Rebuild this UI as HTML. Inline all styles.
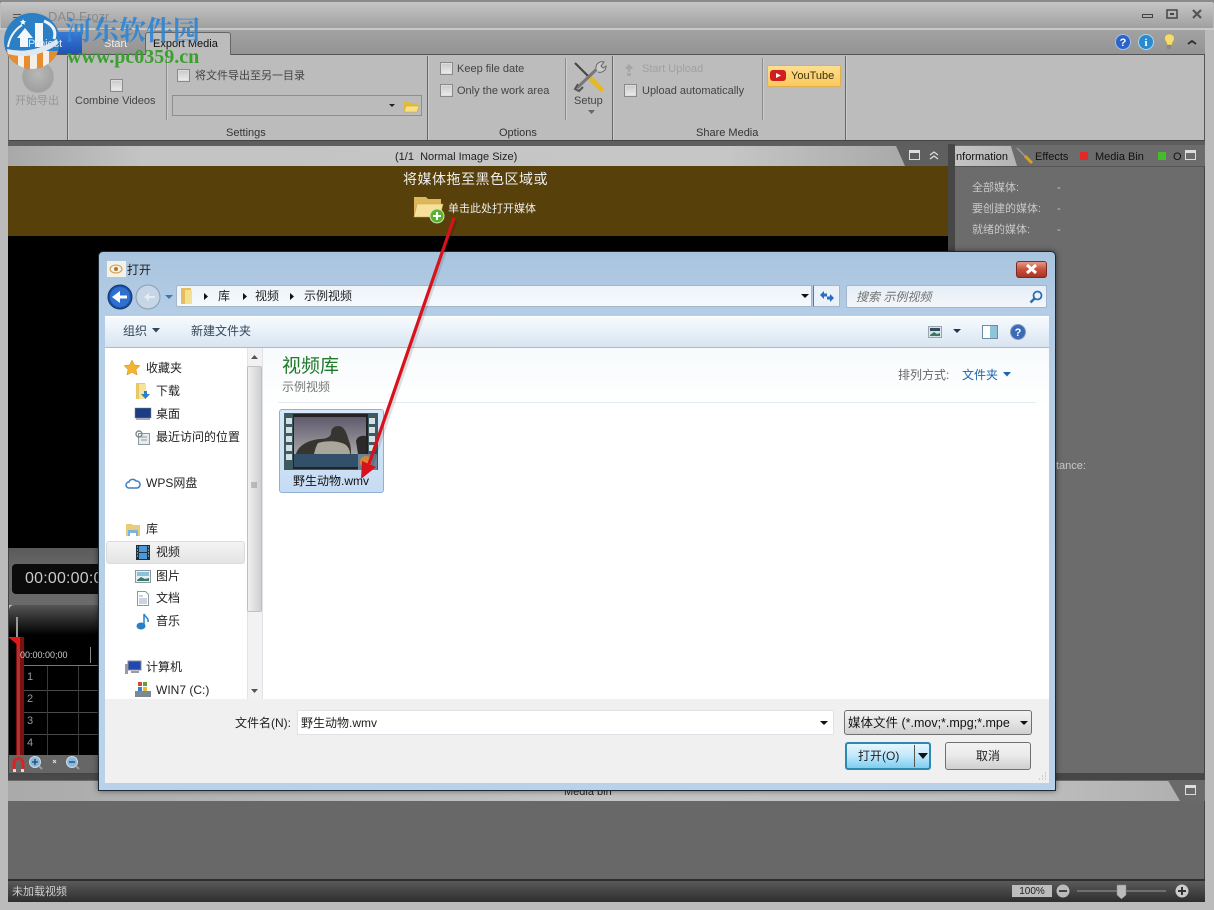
<!DOCTYPE html>
<html><head><meta charset="utf-8"><style>
*{box-sizing:border-box}
html,body{margin:0;padding:0}
body{width:1214px;height:910px;position:relative;overflow:hidden;background:#bbb;font-family:"Liberation Sans","Noto Sans CJK SC",sans-serif;font-size:11px;color:#333}
div{position:absolute}
.t{position:absolute;white-space:nowrap;line-height:14px}
.cb{position:absolute;width:13px;height:13px;border:1px solid #8a8a8a;background:linear-gradient(#c8c8c8,#eee);box-shadow:inset 0 0 0 1px #ddd}
.vs{position:absolute;width:1px;background:#8c8c8c;box-shadow:1px 0 #ccc}
.d{font-size:12px;color:#222}
svg{position:absolute;overflow:visible}
</style></head><body>

<!-- title bar -->
<div style="left:0;top:0;width:1214px;height:3px;background:#8a8a8a"></div>
<div style="left:1px;top:2px;width:1212px;height:26px;background:linear-gradient(#c6c6c6,#a0a0a0)"></div>
<div style="left:0;top:28px;width:1214px;height:2px;background:#c9c9c9"></div>
<div class="t" style="left:48px;top:10px;font-size:13px;color:#8a8a8a">DAD Frozr</div>
<div style="left:13px;top:14px;width:8px;height:1px;background:#555;box-shadow:0 3px #555"></div>
<svg style="left:1140px;top:8px" width="60" height="14"><rect x="2.500" y="6.500" width="10" height="3" fill="none" stroke="#444"/><rect x="27" y="2" width="10" height="8" fill="none" stroke="#444" stroke-width="1.500"/><rect x="30" y="5" width="4" height="2" fill="#444"/><path d="M53 2l8 8M61 2l-8 8" stroke="#555" stroke-width="2.200"/></svg>

<!-- tab bar -->
<div style="left:8px;top:30px;width:1197px;height:25px;background:linear-gradient(#a2a2a2,#949494);border-bottom:1px solid #555"></div>
<div style="left:8px;top:32px;width:74px;height:22px;background:linear-gradient(#3a78d8,#1e54b4)"></div>
<div class="t" style="left:104px;top:37px;color:#eee;font-size:11px">Start</div>
<div style="left:145px;top:32px;width:86px;height:24px;background:#bcbcbc;border:1px solid #666;border-bottom:0;border-radius:3px 3px 0 0"></div>
<div class="t" style="left:153px;top:37px;color:#111;font-size:11px">Export Media</div>
<svg style="left:1112px;top:30px" width="90" height="22">
<circle cx="11" cy="12" r="7.500" fill="#2f62c8" stroke="#9cc0ee"/><text x="11" y="16" font-size="11" font-weight="bold" fill="#fff" text-anchor="middle" font-family="Liberation Sans">?</text>
<circle cx="34" cy="12" r="7.500" fill="#2a8ad0" stroke="#a8d8f0"/><text x="34" y="16" font-size="11" font-weight="bold" fill="#fff" text-anchor="middle" font-family="Liberation Serif">i</text>
<path d="M57 4c4 0 6 3 5 6c-1 2-2 3-2 5h-5c0-2-1-3-2-5c-1-3 1-6 4-6z" fill="#f5dc70" stroke="#b09a40" stroke-width=".5"/><rect x="55" y="15" width="4" height="4" fill="#888"/>
<path d="M76 14l4-3 4 3" fill="none" stroke="#333" stroke-width="2"/></svg>

<!-- ribbon -->
<div style="left:8px;top:55px;width:1197px;height:86px;background:#bcbcbc;border-left:1px solid #777;border-right:1px solid #555;border-bottom:1px solid #444"></div>
<div class="vs" style="left:67px;top:56px;height:84px;background:#666"></div>
<div class="vs" style="left:166px;top:56px;height:64px"></div>
<div class="vs" style="left:427px;top:56px;height:84px;background:#666"></div>
<div class="vs" style="left:565px;top:58px;height:62px"></div>
<div class="vs" style="left:612px;top:56px;height:84px;background:#666"></div>
<div class="vs" style="left:762px;top:58px;height:62px"></div>
<div class="vs" style="left:845px;top:56px;height:84px;background:#666"></div>
<div style="left:22px;top:61px;width:32px;height:32px;border-radius:50%;background:radial-gradient(circle at 50% 40%,#b8b8b8,#979797);border:1px solid #aaa"></div>
<div class="t" style="left:15px;top:94px;color:#969696">开始导出</div>
<div class="cb" style="left:110px;top:79px"></div>
<div class="t" style="left:75px;top:94px;color:#444">Combine Videos</div>
<div class="cb" style="left:177px;top:69px"></div>
<div class="t" style="left:195px;top:69px;color:#444">将文件导出至另一目录</div>
<div style="left:172px;top:95px;width:250px;height:21px;border:1px solid #8e8e8e;background:#bbb"></div>
<svg style="left:386px;top:98px" width="34" height="16"><path d="M3 6h6l-3 3z" fill="#222"/><path d="M18 4h5l1 1h7v9H18z" fill="#e5b93e"/><path d="M18 14l2-6h13l-2 6z" fill="#f8e080" stroke="#c9a030" stroke-width=".5"/></svg>
<div class="t" style="left:226px;top:126px;color:#333">Settings</div>
<div class="cb" style="left:440px;top:62px"></div>
<div class="t" style="left:457px;top:62px;color:#444">Keep file date</div>
<div class="cb" style="left:440px;top:84px"></div>
<div class="t" style="left:457px;top:84px;color:#444">Only the work area</div>
<div class="t" style="left:499px;top:126px;color:#333">Options</div>
<svg style="left:572px;top:60px" width="34" height="34"><path d="M3 3l27 27" stroke="#444" stroke-width="2"/><path d="M18 18l11 11" stroke="#e8b820" stroke-width="5" stroke-linecap="round"/><path d="M29 5L5 28" stroke="#777" stroke-width="3"/><path d="M6 24l-3 5 4 2 4-4" fill="none" stroke="#555" stroke-width="2"/><path d="M24 8a6 6 0 0 1 8-6l-3 4 2 2 3-2a6 6 0 0 1-8 6" fill="#ccc" stroke="#666"/></svg>
<div class="t" style="left:574px;top:94px;color:#444">Setup</div>
<svg style="left:588px;top:110px" width="8" height="5"><path d="M0 0h7l-3.500 4z" fill="#666"/></svg>
<svg style="left:623px;top:63px" width="12" height="15"><path d="M6 1l4 4-3 2v2H5V7L2 5z" fill="#a6a6a6"/><rect x="4" y="10" width="4" height="3" fill="#a6a6a6"/></svg>
<div class="t" style="left:642px;top:62px;color:#a0a0a0">Start Upload</div>
<div class="cb" style="left:624px;top:84px"></div>
<div class="t" style="left:642px;top:84px;color:#444">Upload automatically</div>
<div style="left:767px;top:65px;width:74px;height:22px;background:linear-gradient(#fddf90,#fbc95c);border:1px solid #e0b050;border-radius:2px"></div>
<svg style="left:770px;top:70px" width="16" height="12"><rect width="16" height="11" rx="3" fill="#cf1f1f"/><path d="M6 3l5 2.500-5 2.500z" fill="#fff"/></svg>
<div class="t" style="left:791px;top:69px;color:#3c3010">YouTube</div>
<div class="t" style="left:696px;top:126px;color:#333">Share Media</div>

<!-- middle strip -->
<div style="left:8px;top:141px;width:1197px;height:5px;background:#5e5e5e"></div>
<div style="left:8px;top:145px;width:940px;height:21px;background:#5f5f5f"></div>
<div style="left:8px;top:146px;width:897px;height:20px;background:linear-gradient(90deg,#a8a8a8,#c4c4c4 15%,#c6c6c6 80%,#a9a9a9);clip-path:polygon(0 0,99% 0,100% 100%,0 100%)"></div>
<div class="t" style="left:395px;top:150px;color:#222">(1/1&nbsp; Normal Image Size)</div>
<svg style="left:909px;top:149px" width="32" height="13"><rect x=".5" y="1.500" width="10" height="9" fill="none" stroke="#ddd"/><rect x="1" y="2" width="9" height="2" fill="#ddd"/><path d="M21 6l4-3 4 3M21 10l4-3 4 3" fill="none" stroke="#ddd" stroke-width="1.300"/></svg>
<div style="left:8px;top:166px;width:940px;height:70px;background:#57400a"></div>
<div style="left:8px;top:236px;width:940px;height:312px;background:#000"></div>
<div class="t" style="left:403px;top:170px;font-size:14px;line-height:18px;color:#eee;letter-spacing:.5px">将媒体拖至黑色区域或</div>
<svg style="left:413px;top:194px" width="34" height="30"><path d="M1 3h12l2 2h13v18H1z" fill="#dcb85a"/><path d="M1 23l3-13h26l-3 13z" fill="#f6e09a" stroke="#c9a450" stroke-width=".6"/><circle cx="24" cy="22" r="7" fill="#5cb030" stroke="#cfe8b0"/><path d="M20 22h8M24 18v8" stroke="#fff" stroke-width="2"/></svg>
<div class="t" style="left:448px;top:202px;color:#eee">单击此处打开媒体</div>

<!-- right panel -->
<div style="left:948px;top:144px;width:7px;height:636px;background:#474747"></div>
<div style="left:955px;top:145px;width:250px;height:21px;background:#6c6c6c"></div>
<div style="left:955px;top:146px;width:62px;height:20px;background:linear-gradient(90deg,#c4c4c4,#b4b4b4);clip-path:polygon(0 0,90% 0,100% 100%,0 100%)"></div>
<div class="t" style="left:955px;top:150px;color:#111;width:53px;overflow:hidden;direction:rtl">Information</div>
<svg style="left:1015px;top:147px" width="20" height="18"><path d="M2 1l10 10" stroke="#999" stroke-width="1.500"/><path d="M10 9l7 7" stroke="#d8a020" stroke-width="3"/></svg>
<div class="t" style="left:1035px;top:150px;color:#111">Effects</div>
<div style="left:1080px;top:152px;width:8px;height:8px;background:#e02a2a"></div>
<div class="t" style="left:1095px;top:150px;color:#111">Media Bin</div>
<div style="left:1158px;top:152px;width:8px;height:8px;background:#46bb2c"></div>
<div class="t" style="left:1173px;top:150px;color:#111">O</div>
<svg style="left:1185px;top:149px" width="12" height="12"><rect x=".5" y="1.500" width="10" height="9" fill="none" stroke="#ddd"/><rect x="1" y="2" width="9" height="2" fill="#ddd"/></svg>
<div style="left:955px;top:166px;width:250px;height:607px;background:#6c6c6c;border-right:1px solid #444;border-top:1px solid #555"></div>
<div class="t" style="left:972px;top:181px;color:#c8c8c8">全部媒体:</div>
<div class="t" style="left:972px;top:202px;color:#c8c8c8">要创建的媒体:</div>
<div class="t" style="left:972px;top:223px;color:#c8c8c8">就绪的媒体:</div>
<div class="t" style="left:1057px;top:181px;color:#c8c8c8">-</div>
<div class="t" style="left:1057px;top:202px;color:#c8c8c8">-</div>
<div class="t" style="left:1057px;top:223px;color:#c8c8c8">-</div>
<div class="t" style="left:1056px;top:459px;color:#c8c8c8">tance:</div>

<!-- left timeline -->
<div style="left:8px;top:548px;width:90px;height:57px;background:linear-gradient(#5a5a5a,#666 30%,#6a6a6a)"></div>
<div style="left:12px;top:564px;width:90px;height:30px;background:#0b0b0b;border-radius:4px"></div>
<div class="t" style="left:25px;top:570px;font-size:16px;line-height:18px;color:#c9c9c9;letter-spacing:.2px;width:73px;overflow:hidden">00:00:00:00</div>
<div style="left:9px;top:605px;width:90px;height:150px;background:linear-gradient(#555,#000 30px);border-radius:5px 0 0 0"></div>
<div style="left:16px;top:617px;width:2px;height:20px;background:#999"></div>
<div style="left:16px;top:637px;width:8px;height:118px;background:#7a1010"></div>
<div style="left:17px;top:637px;width:3px;height:118px;background:#b53030"></div>
<svg style="left:8px;top:637px" width="12" height="10"><path d="M0 0h11v9z" fill="#e01818"/></svg>
<div class="t" style="left:20px;top:649px;font-size:9px;line-height:12px;color:#ccc">00:00:00;00</div>
<div style="left:90px;top:647px;width:1px;height:16px;background:#888"></div>
<div style="left:24px;top:665px;width:74px;height:1px;background:#777"></div>
<div style="left:24px;top:690px;width:74px;height:1px;background:#4a4a4a"></div>
<div style="left:24px;top:712px;width:74px;height:1px;background:#4a4a4a"></div>
<div style="left:24px;top:734px;width:74px;height:1px;background:#4a4a4a"></div>
<div style="left:47px;top:666px;width:1px;height:89px;background:#3a3a3a"></div>
<div style="left:78px;top:666px;width:1px;height:89px;background:#3a3a3a"></div>
<div class="t" style="left:27px;top:670px;color:#999">1</div>
<div class="t" style="left:27px;top:692px;color:#999">2</div>
<div class="t" style="left:27px;top:714px;color:#999">3</div>
<div class="t" style="left:27px;top:736px;color:#999">4</div>
<div style="left:8px;top:755px;width:90px;height:20px;background:#666"></div>
<svg style="left:10px;top:755px" width="88" height="20"><path d="M4 15V8a4 4 0 0 1 9 0v7" fill="none" stroke="#d22" stroke-width="3"/><path d="M3 14h3v3H3zM11 14h3v3h-3z" fill="#ddd"/><circle cx="25" cy="7" r="5.500" fill="#8ab8d8" stroke="#cde"/><path d="M22 7h6M25 4v6" stroke="#246" stroke-width="1.300"/><path d="M29 11l3 3" stroke="#a98" stroke-width="2"/><circle cx="62" cy="7" r="5.500" fill="#8ab8d8" stroke="#cde"/><path d="M59 7h6" stroke="#246" stroke-width="1.300"/><path d="M66 11l3 3" stroke="#a98" stroke-width="2"/><path d="M43 5l3 3M46 5l-3 3" stroke="#ddd"/></svg>
<div style="left:8px;top:548px;width:90px;height:232px;border-left:1px solid #444;pointer-events:none"></div>

<!-- bottom -->
<div style="left:8px;top:773px;width:1197px;height:7px;background:#474747"></div>
<div style="left:8px;top:775px;width:90px;height:5px;background:#4a4a4a"></div>
<div style="left:8px;top:780px;width:1197px;height:21px;background:#6a6a6a"></div>
<div style="left:8px;top:781px;width:1172px;height:20px;background:linear-gradient(90deg,#aaa,#c4c4c4 50%,#c0c0c0 85%,#b0b0b0);clip-path:polygon(0 0,99% 0,100% 100%,0 100%)"></div>
<div class="t" style="left:564px;top:785px;color:#222">Media bin</div>
<svg style="left:1185px;top:784px" width="12" height="12"><rect x=".5" y="1.500" width="10" height="9" fill="none" stroke="#ddd"/><rect x="1" y="2" width="9" height="2" fill="#ddd"/></svg>
<div style="left:8px;top:801px;width:1197px;height:78px;background:#686868;border-right:1px solid #444"></div>
<div style="left:8px;top:879px;width:1197px;height:2px;background:#2e2e2e"></div>
<div style="left:8px;top:881px;width:1197px;height:21px;background:linear-gradient(#5a5a5a,#2e2e2e)"></div>
<div class="t" style="left:12px;top:885px;color:#d0d0d0">未加载视频</div>
<div class="t" style="left:1012px;top:885px;width:40px;height:12px;line-height:13px;background:#bdbdbd;color:#222;text-align:center;font-size:10px">100%</div>
<svg style="left:1055px;top:882px" width="145" height="18"><circle cx="8" cy="9" r="6.500" fill="#bbb"/><path d="M4 9h8" stroke="#444" stroke-width="2"/><path d="M22 9h89" stroke="#999"/><path d="M62 3h9v10l-4.500 4-4.500-4z" fill="#bbb" stroke="#888" stroke-width=".5"/><circle cx="127" cy="9" r="6.500" fill="#ccc"/><path d="M123 9h8M127 5v8" stroke="#333" stroke-width="2"/></svg>

<!-- dialog -->
<div style="left:98px;top:251px;width:958px;height:540px;border:1px solid #1c2a38;border-radius:5px 5px 0 0;background:linear-gradient(#a9c4de,#b4cde6 60px,#b9d2ea);box-shadow:0 0 6px rgba(0,0,0,.5)"></div>
<div style="left:107px;top:261px;width:19px;height:16px;background:#f6f1e6"></div>
<svg style="left:109px;top:263px" width="14" height="12"><ellipse cx="7" cy="6" rx="6" ry="4" fill="none" stroke="#c89a40"/><circle cx="7" cy="6" r="2" fill="#b9762c"/></svg>
<div class="t d" style="left:127px;top:263px">打开</div>
<div style="left:1016px;top:261px;width:31px;height:17px;border:1px solid #7a2a20;border-radius:3px;background:linear-gradient(#e49a8a,#c8503c 50%,#a83424)"></div>
<svg style="left:1025px;top:264px" width="14" height="11"><path d="M2 1l9 8M11 1l-9 8" stroke="#fff" stroke-width="3"/></svg>
<!-- nav -->
<svg style="left:106px;top:283px" width="72" height="28"><circle cx="14" cy="14" r="12" fill="#1a4fa8" stroke="#173a70"/><circle cx="14" cy="14" r="10" fill="#2e6fd0"/><path d="M21 12.500h-7V8l-8 6 8 6v-4.500h7z" fill="#fff"/><circle cx="42" cy="14" r="12" fill="#c6d6e6" stroke="#8a9cb0"/><path d="M49 13h-6V10l-5 4 5 4v-3h6z" fill="#e4ecf4"/><path d="M59 12h8l-4 4z" fill="#3a78b8"/></svg>
<div style="left:176px;top:285px;width:636px;height:22px;background:linear-gradient(#eef4fa,#f6f9fc);border:1px solid #a3b6ca;border-radius:2px 0 0 2px"></div>
<svg style="left:179px;top:287px" width="16" height="18"><path d="M2 1h10v16H2z" fill="#e4be5c"/><path d="M6 3h7v14H6z" fill="#f4e08e"/></svg>
<div class="t d" style="left:218px;top:289px;line-height:14px">库</div>
<div class="t d" style="left:255px;top:289px">视频</div>
<div class="t d" style="left:304px;top:289px">示例视频</div>
<svg style="left:200px;top:292px" width="100" height="9"><path d="M4 1l4 3.500-4 3.500zM43 1l4 3.500-4 3.500zM90 1l4 3.500-4 3.500z" fill="#111"/></svg>
<svg style="left:800px;top:293px" width="10" height="6"><path d="M1 1h8l-4 4z" fill="#111"/></svg>
<div style="left:813px;top:285px;width:27px;height:22px;background:#eaf1f8;border:1px solid #a3b6ca;border-left:1px solid #607890"></div>
<svg style="left:819px;top:289px" width="16" height="15"><path d="M1 6l4-4v2.500h3v3H5V10z" fill="#2a6cc0"/><path d="M15 9l-4 4v-2.500H8v-3h3V5z" fill="#2a6cc0"/></svg>
<div style="left:846px;top:285px;width:201px;height:23px;background:linear-gradient(#e6eef6,#f2f6fa);border:1px solid #a3b6ca;border-radius:2px"></div>
<div class="t" style="left:856px;top:290px;font-style:italic;color:#707070;font-size:12px">搜索 示例视频</div>
<svg style="left:1029px;top:290px" width="14" height="14"><circle cx="8.500" cy="5.500" r="4" fill="none" stroke="#2a6fb0" stroke-width="1.800"/><path d="M5.500 8.500L1.500 12.500" stroke="#2a6fb0" stroke-width="2.500"/></svg>
<!-- toolbar -->
<div style="left:105px;top:316px;width:944px;height:32px;background:linear-gradient(#f6fafd,#e8f0f8 50%,#d8e4f0);border-top:1px solid #fff;border-bottom:1px solid #a8bccf"></div>
<div class="t d" style="left:123px;top:324px;color:#33475b">组织</div>
<svg style="left:152px;top:328px" width="9" height="6"><path d="M0 0h8l-4 4.500z" fill="#33475b"/></svg>
<div class="t d" style="left:191px;top:324px;color:#33475b">新建文件夹</div>
<svg style="left:928px;top:323px" width="100" height="18"><rect x=".5" y="3.500" width="13" height="11" fill="#d4e4e8" stroke="#99a8b0"/><path d="M2 12l4-3 3 2 3-1v3H2z" fill="#3a7a60"/><rect x="2" y="5" width="10" height="3" fill="#3a4a60"/><path d="M25 6h8l-4 4z" fill="#22364e"/><rect x="54.500" y="2.500" width="15" height="13" fill="#fff" stroke="#6f8ba4"/><rect x="62" y="3" width="7" height="12" fill="#8ec4d8"/><circle cx="90" cy="9" r="7.500" fill="#3a6ab8" stroke="#8a9cc0"/><text x="90" y="13" font-size="11" font-weight="bold" fill="#fff" text-anchor="middle" font-family="Liberation Sans">?</text></svg>
<!-- side -->
<div style="left:105px;top:348px;width:158px;height:351px;background:#fff"></div>
<div style="left:247px;top:348px;width:16px;height:351px;background:#f2f2f2;border-left:1px solid #e4e4e4;border-right:1px solid #dfe4ea"></div>
<div style="left:247px;top:366px;width:15px;height:246px;background:linear-gradient(90deg,#f0f0f0,#cfcfcf);border:1px solid #c0c0c0;border-radius:2px"></div>
<svg style="left:250px;top:354px" width="10" height="340"><path d="M1 5h7L4.500 1z" fill="#555"/><path d="M1 335h7l-3.500 4z" fill="#555"/><path d="M1 129h6M1 131h6M1 133h6" stroke="#777" stroke-width=".8"/></svg>
<div style="left:106px;top:541px;width:139px;height:23px;background:linear-gradient(#f4f4f4,#e4e4e4);border:1px solid #dcdcdc;border-radius:3px"></div>
<svg style="left:124px;top:360px" width="20" height="16"><path d="M8 0l2.400 5 5.600.7-4 3.900 1 5.400-5-2.700-5 2.700 1-5.400-4-3.900 5.600-.7z" fill="#f4b430" stroke="#c88a20" stroke-width=".5"/></svg>
<div class="t d" style="left:146px;top:361px">收藏夹</div>
<svg style="left:135px;top:382px" width="18" height="18"><path d="M1 1h9v16H1z" fill="#eac766"/><path d="M4 2h7v15H4z" fill="#f6e49a"/><path d="M9 9h3v3h3l-4.500 5L6 12h3z" fill="#2a80d0"/></svg>
<div class="t d" style="left:156px;top:384px">下载</div>
<svg style="left:135px;top:408px" width="16" height="13"><rect width="16" height="10" fill="#1c3c84" stroke="#888" stroke-width=".5"/><rect x="1" y="10" width="14" height="2" fill="#aab"/></svg>
<div class="t d" style="left:156px;top:407px">桌面</div>
<svg style="left:135px;top:430px" width="16" height="15"><rect x="3.500" y="3.500" width="11" height="11" fill="#e8ecec" stroke="#8a9a9a"/><circle cx="4" cy="4" r="3" fill="none" stroke="#7a8a8a" stroke-width="1.400"/><path d="M6 7h6M6 10h6" stroke="#8a9a9a"/></svg>
<div class="t d" style="left:156px;top:430px">最近访问的位置</div>
<svg style="left:125px;top:477px" width="16" height="13"><path d="M4 11a3 3 0 0 1 0-6a4 4 0 0 1 7-1a3.500 3.500 0 0 1 1 7z" fill="#fff" stroke="#3a80c8" stroke-width="1.500"/></svg>
<div class="t d" style="left:146px;top:476px">WPS网盘</div>
<svg style="left:125px;top:523px" width="16" height="14"><path d="M1 1h6l1 1h7v11H1z" fill="#eacb78"/><path d="M3 7h10v6H3z" fill="#7ab4dc"/><path d="M5 10h6v3H5z" fill="#fff"/></svg>
<div class="t d" style="left:146px;top:522px">库</div>
<svg style="left:136px;top:545px" width="14" height="15"><rect width="14" height="15" fill="#1c3040"/><rect x="3" y="1" width="8" height="6" fill="#4a98d8"/><rect x="3" y="8" width="8" height="6" fill="#4a98d8"/><path d="M1 2h1M1 5h1M1 8h1M1 11h1M12 2h1M12 5h1M12 8h1M12 11h1" stroke="#ddd"/></svg>
<div class="t d" style="left:156px;top:545px">视频</div>
<svg style="left:135px;top:570px" width="16" height="13"><rect x=".5" y=".5" width="15" height="12" fill="#e8f0f4" stroke="#8a9aa4"/><path d="M2 10l4-3 4 2 4-1v3H2z" fill="#3a7a68"/><rect x="2" y="2" width="12" height="4" fill="#90c0d8"/></svg>
<div class="t d" style="left:156px;top:569px">图片</div>
<svg style="left:137px;top:591px" width="12" height="15"><path d="M.5.5h8l3 3v11H.5z" fill="#fff" stroke="#8a9aa4"/><path d="M2 5h4M2 8h8M2 10h8M2 12h8" stroke="#7a8aa4" stroke-width=".8"/></svg>
<div class="t d" style="left:156px;top:591px">文档</div>
<svg style="left:136px;top:613px" width="14" height="17"><ellipse cx="5" cy="13" rx="4.500" ry="3.500" fill="#2a80c8"/><path d="M8 13V1c1 3 5 4 4 8" fill="none" stroke="#2a80c8" stroke-width="1.500"/></svg>
<div class="t d" style="left:156px;top:614px">音乐</div>
<svg style="left:125px;top:660px" width="18" height="15"><rect x="3" y="1" width="13" height="9" fill="#2248b0" stroke="#889"/><rect x="0" y="4" width="3" height="10" fill="#99a"/><rect x="6" y="11" width="8" height="2" fill="#99a"/></svg>
<div class="t d" style="left:146px;top:660px">计算机</div>
<svg style="left:135px;top:681px" width="16" height="16"><rect y="10" width="16" height="6" fill="#7a8a90"/><rect x="3" y="1" width="4" height="4" fill="#d04a30"/><rect x="8" y="1" width="4" height="4" fill="#60a040"/><rect x="3" y="6" width="4" height="4" fill="#3a80c8"/><rect x="8" y="6" width="4" height="4" fill="#e8b830"/></svg>
<div class="t d" style="left:156px;top:683px">WIN7 (C:)</div>
<!-- main -->
<div style="left:263px;top:348px;width:786px;height:351px;background:linear-gradient(#f7fafc,#fff 60px)"></div>
<div class="t" style="left:282px;top:355px;font-size:19px;line-height:24px;color:#1f7a2a">视频库</div>
<div class="t d" style="left:282px;top:380px;color:#777">示例视频</div>
<div style="left:278px;top:402px;width:758px;height:1px;background:#e4ebf1"></div>
<div class="t d" style="left:898px;top:368px;color:#666">排列方式:</div>
<div class="t d" style="left:962px;top:368px;color:#1c64ac">文件夹</div>
<svg style="left:1003px;top:372px" width="9" height="6"><path d="M0 0h8l-4 4.500z" fill="#1c64ac"/></svg>
<div style="left:279px;top:409px;width:105px;height:84px;background:linear-gradient(#d8e8f8,#c6dcf4);border:1px solid #8eb0d6;border-radius:3px"></div>
<svg style="left:284px;top:413px" width="94" height="58"><rect width="94" height="57" fill="#3c5a60"/><rect x="9" y="1" width="75" height="55" fill="#222"/>
<defs><linearGradient id="sky" x1="0" y1="0" x2="0" y2="1"><stop offset="0" stop-color="#5e5a6c"/><stop offset="1" stop-color="#aaa6a8"/></linearGradient></defs>
<rect x="10" y="4" width="72" height="38" fill="url(#sky)"/><rect x="10" y="41" width="72" height="13" fill="#33506a"/>
<path d="M12 41c2-8 12-14 24-15 6 0 10-2 11-5 0-5 2-8 8-8 6 1 8 8 10 15 2 5 2 9 2 13z" fill="#37352f"/>
<path d="M34 30c10-3 22-2 28 2 3 3 4 6 4 9H30c1-4 2-8 4-11z" fill="#aaa69c"/>
<path d="M72 28c1-4 5-6 10-5v18H74z" fill="#2c2a28"/>
<g fill="#d6e0e0"><rect x="2" y="5" width="6" height="6"/><rect x="2" y="14" width="6" height="6"/><rect x="2" y="23" width="6" height="6"/><rect x="2" y="32" width="6" height="6"/><rect x="2" y="41" width="6" height="6"/><rect x="85" y="5" width="6" height="6"/><rect x="85" y="14" width="6" height="6"/><rect x="85" y="23" width="6" height="6"/><rect x="85" y="32" width="6" height="6"/></g><rect x="74" y="41" width="19" height="16" fill="#6a8494"/><circle cx="82" cy="49" r="6" fill="#d8843a"/></svg>
<div class="t d" style="left:293px;top:474px;color:#111">野生动物.wmv</div>
<!-- bottom of dialog -->
<div style="left:105px;top:699px;width:944px;height:84px;background:#f0f0f0"></div>
<div class="t d" style="left:235px;top:716px">文件名(N):</div>
<div style="left:297px;top:710px;width:537px;height:25px;background:#fff;border:1px solid #dfe3e8"></div>
<div class="t d" style="left:301px;top:716px">野生动物.wmv</div>
<svg style="left:819px;top:720px" width="10" height="6"><path d="M1 1h8l-4 4z" fill="#111"/></svg>
<div style="left:844px;top:710px;width:188px;height:25px;background:linear-gradient(#f2f2f2,#e4e4e4 50%,#cfcfcf);border:1px solid #707070;border-radius:3px"></div>
<div class="t" style="left:848px;top:716px;font-size:12.500px;color:#111">媒体文件 (*.mov;*.mpg;*.mpe</div>
<svg style="left:1019px;top:720px" width="10" height="6"><path d="M1 1h8l-4 4z" fill="#111"/></svg>
<div style="left:845px;top:742px;width:86px;height:28px;background:linear-gradient(#e6f6fe,#bfe8fb 50%,#7fcdf0);border:2px solid #2c88b0;border-radius:3px"></div>
<div style="left:914px;top:745px;width:1px;height:22px;background:#555"></div>
<svg style="left:917px;top:752px" width="12" height="8"><path d="M1 1h10l-5 6z" fill="#111"/></svg>
<div class="t d" style="left:858px;top:749px;color:#222">打开(O)</div>
<div style="left:945px;top:742px;width:86px;height:28px;background:linear-gradient(#f2f2f2,#ebebeb 45%,#d0d0d0);border:1px solid #707070;border-radius:3px"></div>
<div class="t d" style="left:976px;top:749px;color:#222">取消</div>
<svg style="left:1038px;top:772px" width="10" height="10"><path d="M7 1h1M4 4h1M7 4h1M1 7h1M4 7h1M7 7h1" stroke="#aaa"/></svg>

<!-- red arrow -->
<svg style="left:0;top:0" width="1214" height="910">
<path d="M454 219L370 464" stroke="rgba(0,0,0,.12)" stroke-width="3" transform="translate(2,1)"/>
<path d="M454 218L369 464" stroke="#d8121c" stroke-width="3.200"/>
<path d="M361 479L362 461 376 467z" fill="#d8121c"/>
</svg>

<!-- watermark -->
<svg style="left:4px;top:13px" width="60" height="60">
<defs><clipPath id="lc"><circle cx="28" cy="28" r="28"/></clipPath></defs>
<g clip-path="url(#lc)">
<rect x="0" y="0" width="60" height="60" fill="#2b7fc4"/>
<rect x="0" y="38" width="60" height="20" fill="#e88c30"/>
<path d="M14 38h6v20h-6zM26 38h7v20h-7zM39 38h6v20h-6z" fill="#f2efe8"/>
<path d="M3 36Q28 42 53 26L54 31Q30 48 4 41z" fill="#dfe8f0"/>
<path d="M40 8Q54 14 50 26" fill="none" stroke="#eef3f8" stroke-width="3"/>
<path d="M4 34Q6 20 18 12" fill="none" stroke="#eef3f8" stroke-width="2"/>
<path d="M21 15L13 25h3v9h8v-9h5z" fill="#f4f7fa"/>
<rect x="31" y="10" width="8" height="24" fill="#f4f7fa"/>
<path d="M19 6l1 2 2 .3-1.500 1.500.4 2-1.900-1-1.900 1 .4-2L16 8.300l2-.3z" fill="#fff"/>
</g>
</svg>
<div class="t" style="left:28px;top:37px;color:#dfe8f5;font-size:11px">Project</div>
<div class="t" style="left:65px;top:13px;font-size:27px;line-height:32px;font-weight:bold;color:#2f86d4;opacity:.92;font-family:'Noto Serif CJK SC','Liberation Serif',serif">河东软件园</div>
<div class="t" style="left:67px;top:47px;font-size:20px;line-height:21px;font-weight:bold;color:#3aa02e;font-family:'Liberation Serif',serif">www.pc0359.cn</div>
</body></html>
